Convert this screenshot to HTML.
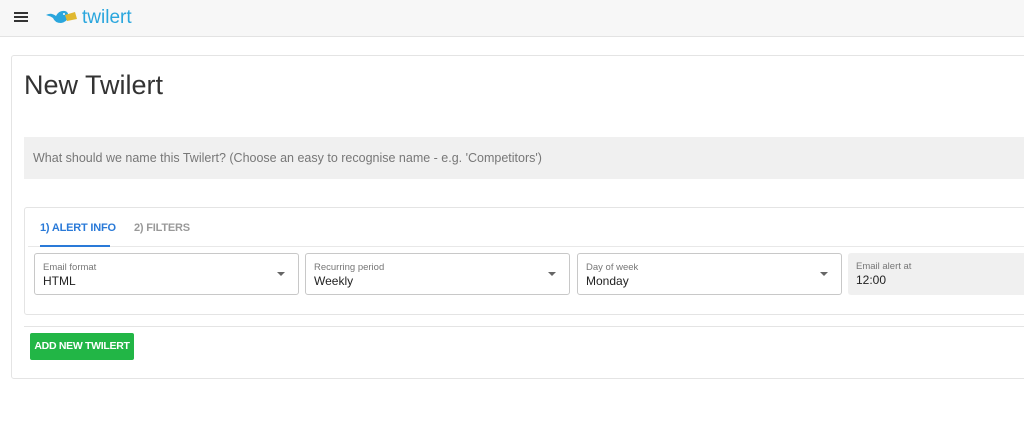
<!DOCTYPE html><html><head><style>
body{margin:0;width:1024px;height:437px;overflow:hidden;background:#fff;font-family:"Liberation Sans",sans-serif;position:relative}
.a{position:absolute}
.hdr{left:0;top:0;width:1024px;height:36px;background:#f7f7f7;border-bottom:1px solid #e3e3e3}
.card{left:11px;top:55px;width:1040px;height:322px;border:1px solid #e4e4e4;border-radius:3px}
.f{top:253px;height:42px;border:1px solid #c8c8c8;border-radius:3px;box-sizing:border-box}
.f .l{position:absolute;left:8px;top:8px;font-size:9.5px;color:#777}
.f .v{position:absolute;left:8px;top:20px;font-size:12px;color:#222}
.f .c{position:absolute;right:13px;top:18px;width:0;height:0;border-left:4px solid transparent;border-right:4px solid transparent;border-top:4px solid #666}
</style></head><body>
<div class="a hdr"></div>
<div class="a" style="left:14px;top:12px;width:14px;height:2px;background:#333;box-shadow:0 4px 0 #333,0 8px 0 #333"></div>
<svg class="a" style="left:45px;top:7px" width="34" height="22" viewBox="0 0 34 22"><path d="M1 8 Q6 5 11 9 Q14 3 20 4 Q24 5 23 10 Q22 15 16 16 Q10 16 8 11 Q5 9 1 8Z" fill="#2aa6dd"/><path d="M20 8 L30 5 L32 12 L22 14Z" fill="#e0b830"/><circle cx="19" cy="7" r="1" fill="#fff"/></svg>
<div class="a" style="left:82px;top:7px;font-size:19px;color:#2aa6dd">twilert</div>
<div class="a card"></div>
<div class="a" style="left:24px;top:70px;font-size:27px;color:#333">New Twilert</div>
<div class="a" style="left:24px;top:137px;width:1000px;height:42px;background:#f0f0f0"></div>
<div class="a" style="left:33px;top:151px;font-size:12.5px;color:#777">What should we name this Twilert? (Choose an easy to recognise name - e.g. 'Competitors')</div>
<div class="a" style="left:24px;top:207px;width:1010px;height:106px;border:1px solid #e4e4e4;border-radius:3px"></div>
<div class="a" style="left:28px;top:246px;width:1000px;height:1px;background:#e8e8e8"></div>
<div class="a" style="left:40px;top:222px;font-size:11px;color:#2a7ad8;font-weight:bold;letter-spacing:-0.2px">1) ALERT INFO</div>
<div class="a" style="left:40px;top:245px;width:70px;height:2px;background:#2a7ad8"></div>
<div class="a" style="left:134px;top:222px;font-size:11px;color:#999;font-weight:bold;letter-spacing:-0.2px">2) FILTERS</div>
<div class="a f" style="left:34px;width:265px"><span class="l">Email format</span><span class="v">HTML</span><span class="c"></span></div>
<div class="a f" style="left:305px;width:265px"><span class="l">Recurring period</span><span class="v">Weekly</span><span class="c"></span></div>
<div class="a f" style="left:577px;width:265px"><span class="l">Day of week</span><span class="v">Monday</span><span class="c"></span></div>
<div class="a f" style="left:848px;width:200px;border:none;background:#f0f0f0"><span class="l">Email alert at</span><span class="v">12:00</span></div>
<div class="a" style="left:24px;top:326px;width:1000px;height:1px;background:#e4e4e4"></div>
<div class="a" style="left:30px;top:333px;width:104px;height:27px;background:#22b646;border-radius:2px;color:#fff;font-size:10.5px;font-weight:bold;text-align:center;line-height:27px;letter-spacing:-0.3px">ADD NEW TWILERT</div>
</body></html>
